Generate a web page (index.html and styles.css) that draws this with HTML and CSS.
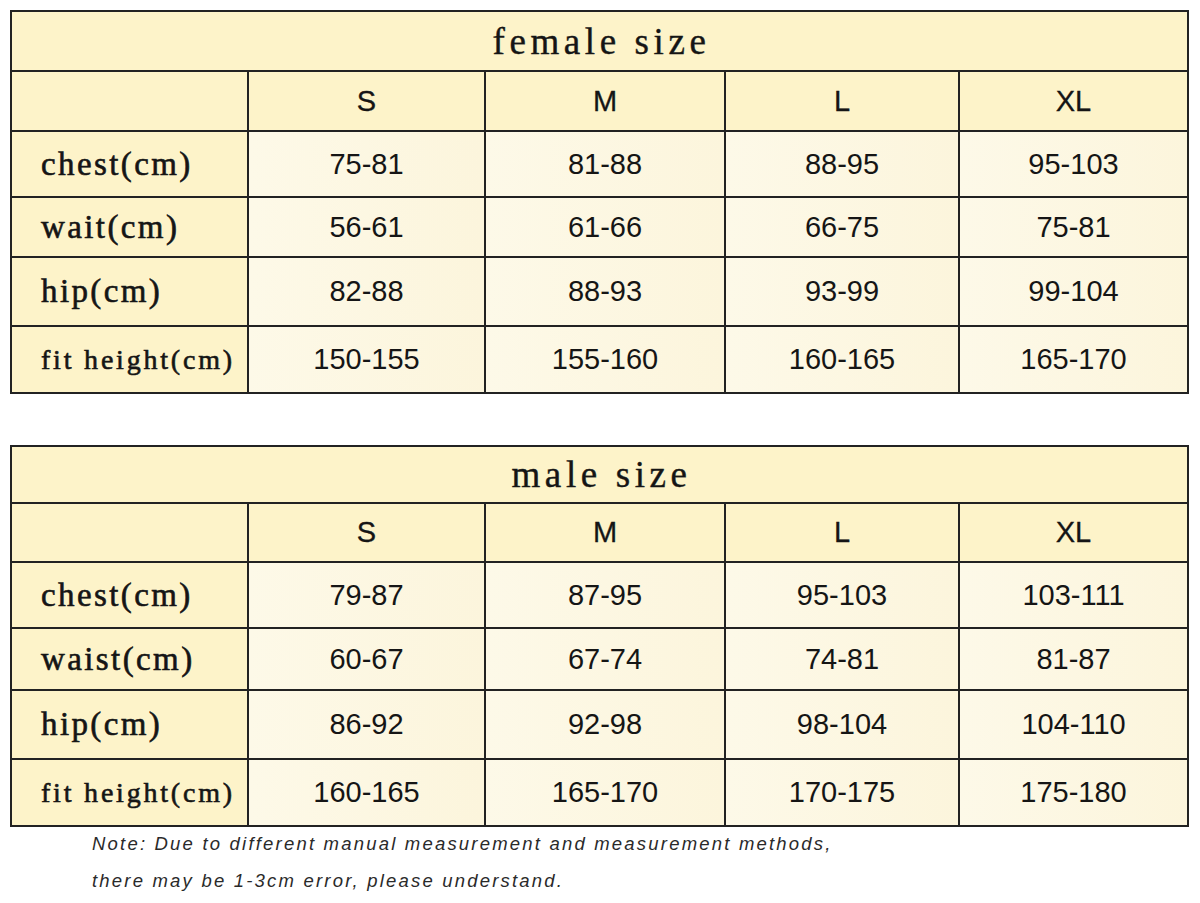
FILE: index.html
```html
<!DOCTYPE html>
<html>
<head>
<meta charset="utf-8">
<link rel="stylesheet" href="styles.css">
</head>
<body>
<div class="page">
  <table class="chart female">
    <colgroup><col class="c1"><col class="c2"><col class="c3"><col class="c4"><col class="c5"></colgroup>
    <tr class="r-title"><th class="title" colspan="5">female size</th></tr>
    <tr class="r-head"><th class="lab"></th><th class="sz">S</th><th class="sz">M</th><th class="sz">L</th><th class="sz">XL</th></tr>
    <tr class="r1"><th class="lab">chest(cm)</th><td>75-81</td><td>81-88</td><td>88-95</td><td>95-103</td></tr>
    <tr class="r2"><th class="lab">wait(cm)</th><td>56-61</td><td>61-66</td><td>66-75</td><td>75-81</td></tr>
    <tr class="r3"><th class="lab">hip(cm)</th><td>82-88</td><td>88-93</td><td>93-99</td><td>99-104</td></tr>
    <tr class="r4"><th class="lab small">fit height(cm)</th><td>150-155</td><td>155-160</td><td>160-165</td><td>165-170</td></tr>
  </table>

  <table class="chart male">
    <colgroup><col class="c1"><col class="c2"><col class="c3"><col class="c4"><col class="c5"></colgroup>
    <tr class="r-title"><th class="title" colspan="5">male size</th></tr>
    <tr class="r-head"><th class="lab"></th><th class="sz">S</th><th class="sz">M</th><th class="sz">L</th><th class="sz">XL</th></tr>
    <tr class="r1"><th class="lab">chest(cm)</th><td>79-87</td><td>87-95</td><td>95-103</td><td>103-111</td></tr>
    <tr class="r2"><th class="lab">waist(cm)</th><td>60-67</td><td>67-74</td><td>74-81</td><td>81-87</td></tr>
    <tr class="r3"><th class="lab">hip(cm)</th><td>86-92</td><td>92-98</td><td>98-104</td><td>104-110</td></tr>
    <tr class="r4"><th class="lab small">fit height(cm)</th><td>160-165</td><td>165-170</td><td>170-175</td><td>175-180</td></tr>
  </table>

  <div class="note">
    <p>Note: Due to different manual measurement and measurement methods,</p>
    <p>there may be 1-3cm error, please understand.</p>
  </div>
</div>
</body>
</html>
```

FILE: styles.css
```css
html, body {
  margin: 0;
  padding: 0;
  background: #ffffff;
}

.page {
  padding: 10px 10px 0 10px;
  width: 1180px;
}

.chart {
  border-collapse: collapse;
  table-layout: fixed;
  width: 1177px;
  border: 2px solid #222;
}

.c1 { width: 237px; }
.c2 { width: 237px; }
.c3 { width: 240px; }
.c4 { width: 234px; }
.c5 { width: 229px; }

.chart th,
.chart td {
  border: 2px solid #222;
  padding: 0;
  vertical-align: middle;
}

.chart th {
  background: #fdf3c9;
  font-weight: normal;
}

.chart td {
  background: linear-gradient(90deg, #fdf9e8 0%, #fcf5dc 100%);
  text-align: center;
  font-family: "Liberation Sans", Arial, sans-serif;
  font-size: 29px;
  color: #151515;
}

.title {
  font-family: "Liberation Serif", serif;
  font-size: 37px;
  letter-spacing: 4.6px;
  padding-left: 4px !important;
  color: #151515;
  -webkit-text-stroke: 0.4px #151515;
  text-align: center;
}

.sz {
  font-family: "Liberation Sans", Arial, sans-serif;
  font-size: 29px;
  color: #151515;
  -webkit-text-stroke: 0.3px #151515;
  text-align: center;
}

.lab {
  text-align: left;
  padding-left: 29px !important;
  font-family: "Liberation Serif", serif;
  font-size: 33px;
  letter-spacing: 2.4px;
  color: #151515;
  -webkit-text-stroke: 0.6px #151515;
  white-space: nowrap;
}

.lab.small {
  font-size: 28px;
  letter-spacing: 2.8px;
}

.female .r-title { height: 60px; }
.female .r-head { height: 60px; }
.female .r1 { height: 66px; }
.female .r2 { height: 60px; }
.female .r3 { height: 69px; }
.female .r4 { height: 67px; }

.male { margin-top: 51px; }
.male .r-title { height: 57px; }
.male .r-head { height: 59px; }
.male .r1 { height: 66px; }
.male .r2 { height: 62px; }
.male .r3 { height: 69px; }
.male .r4 { height: 67px; }

.note {
  padding-left: 82px;
  margin-top: -2px;
  font-family: "Liberation Sans", Arial, sans-serif;
  font-style: italic;
  font-size: 18.5px;
  letter-spacing: 2.2px;
  color: #2a2a2a;
}

.note p {
  margin: 0;
  line-height: 37px;
}
```
